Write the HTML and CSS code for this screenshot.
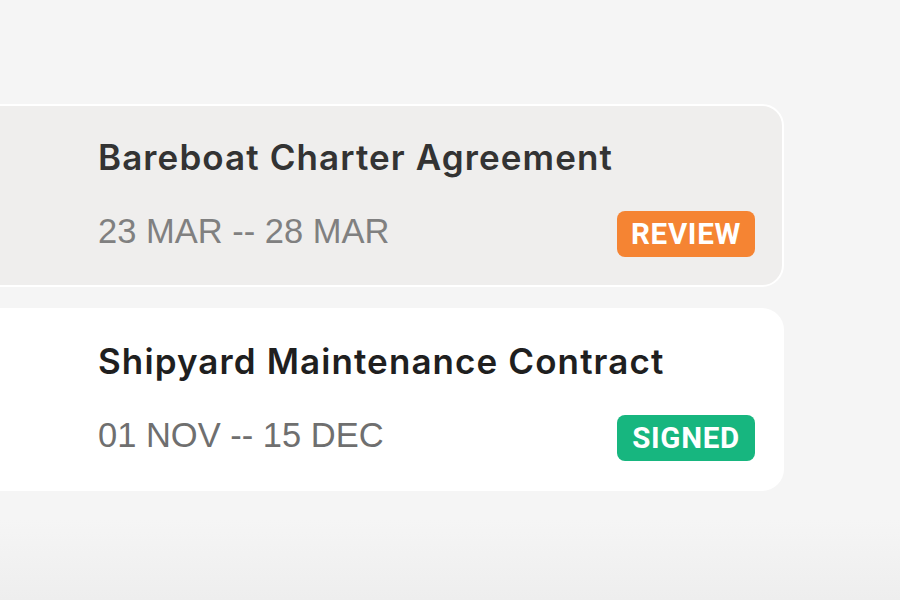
FILE: index.html
```html
<!DOCTYPE html>
<html>
<head>
    <title>Contracts</title>
    <meta name="viewport" content="width=device-width, initial-scale=1">
    <link rel="stylesheet" href="styles.css">
</head>
<body>
    <div class="list">
        <!-- Pending contract -->
        <div class="card muted">
            <h2 class="title">Bareboat Charter Agreement</h2>
            <div class="row">
                <span class="dates">23 MAR -- 28 MAR</span>
                <span class="badge review">REVIEW</span>
            </div>
        </div>

        <!-- Signed contract -->
        <div class="card">
            <h2 class="title">Shipyard Maintenance Contract</h2>
            <div class="row">
                <span class="dates">01 NOV -- 15 DEC</span>
                <span class="badge signed">SIGNED</span>
            </div>
        </div>
    </div>
</body>
</html>
```

FILE: styles.css
```css
* { margin: 0; padding: 0; box-sizing: border-box; }
html, body { height: 100%; }
body { background: linear-gradient(#f5f5f5 0, #f5f5f5 520px, #eeeeee 600px); overflow: hidden; }
.list { width: 808px; margin: 104px 0 0 -24px; display: flex; flex-direction: column; gap: 21px; }
.card { background: #fff; border-radius: 22px; padding: 33px 29px 30px 122px; height: 183px; display: flex; flex-direction: column; justify-content: space-between; }
.card.muted { background: #efeeed; border: 2px solid #fff; padding: 31px 27px 28px 120px; }
.title { font: 600 35px/40px Inter, sans-serif; color: #1f1f1f; letter-spacing: 1.1px; }
.muted .title { color: #333; }
.row { display: flex; justify-content: space-between; align-items: flex-end; }
.dates { font: 34.5px/40px "Liberation Sans", sans-serif; color: #6f6f6f; padding-bottom: 6px; }
.muted .dates { color: #808080; }
.badge { width: 138px; height: 46px; border-radius: 8px; color: #fff; font: bold 29.5px Roboto, sans-serif; letter-spacing: 0.7px; display: flex; align-items: center; justify-content: center; }
.review { background: #f58433; }
.signed { background: #17b67f; }
```
